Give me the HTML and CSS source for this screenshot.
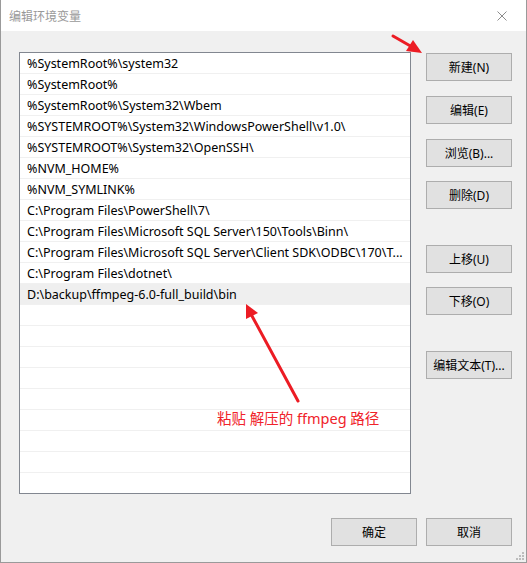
FILE: index.html
```html
<!DOCTYPE html>
<html lang="zh-CN">
<head>
<meta charset="utf-8">
<title>编辑环境变量</title>
<link rel="stylesheet" href="styles.css">
</head>
<body>
<div class="window">
  <div class="titlebar">
    <span class="title">编辑环境变量</span>
    <svg class="close" width="10" height="10" viewBox="0 0 10 10"><path d="M0.5 0.5 L9.5 9.5 M9.5 0.5 L0.5 9.5" stroke="#8c8c8c" stroke-width="1" fill="none"/></svg>
  </div>
  <div class="content">
    <div class="list">
      <div class="row">%SystemRoot%\system32</div>
      <div class="row">%SystemRoot%</div>
      <div class="row">%SystemRoot%\System32\Wbem</div>
      <div class="row">%SYSTEMROOT%\System32\WindowsPowerShell\v1.0\</div>
      <div class="row">%SYSTEMROOT%\System32\OpenSSH\</div>
      <div class="row">%NVM_HOME%</div>
      <div class="row">%NVM_SYMLINK%</div>
      <div class="row">C:\Program Files\PowerShell\7\</div>
      <div class="row">C:\Program Files\Microsoft SQL Server\150\Tools\Binn\</div>
      <div class="row">C:\Program Files\Microsoft SQL Server\Client SDK\ODBC\170\T...</div>
      <div class="row">C:\Program Files\dotnet\</div>
      <div class="row selected">D:\backup\ffmpeg-6.0-full_build\bin</div>
      <div class="row"></div>
      <div class="row"></div>
      <div class="row"></div>
      <div class="row"></div>
      <div class="row"></div>
      <div class="row note-row"><span class="note">粘贴 解压的 ffmpeg 路径</span></div>
      <div class="row"></div>
      <div class="row"></div>
      <div class="row"></div>
    </div>
    <div class="side">
      <button class="btn">新建(N)</button>
      <button class="btn gap15">编辑(E)</button>
      <button class="btn gap15">浏览(B)...</button>
      <button class="btn gap14">删除(D)</button>
      <button class="btn gap36">上移(U)</button>
      <button class="btn gap14">下移(O)</button>
      <button class="btn gap36">编辑文本(T)...</button>
    </div>
  </div>
  <div class="footer">
    <button class="btn">确定</button>
    <button class="btn">取消</button>
  </div>
  <svg class="grip" width="10" height="10" viewBox="0 0 10 10">
    <rect x="7" y="1" width="2" height="2" fill="#bcbcbc"/>
    <rect x="4" y="4" width="2" height="2" fill="#bcbcbc"/>
    <rect x="7" y="4" width="2" height="2" fill="#bcbcbc"/>
    <rect x="1" y="7" width="2" height="2" fill="#bcbcbc"/>
    <rect x="4" y="7" width="2" height="2" fill="#bcbcbc"/>
    <rect x="7" y="7" width="2" height="2" fill="#bcbcbc"/>
  </svg>
  <svg class="arrows" width="527" height="563" viewBox="0 0 527 563">
    <g fill="#ec1c24" stroke="#ec1c24">
      <line x1="393" y1="36" x2="413" y2="47.5" stroke-width="3" stroke-linecap="round"/>
      <polygon points="422,53 406,51 413,40" stroke="none"/>
      <line x1="298" y1="401" x2="252" y2="316" stroke-width="3" stroke-linecap="round"/>
      <polygon points="246,304 258,313 246,319" stroke="none"/>
    </g>
  </svg>
</div>
</body>
</html>
```

FILE: styles.css
```css
* { box-sizing: border-box; }
html, body { margin: 0; padding: 0; }
body {
  width: 527px;
  height: 563px;
  background: #ffffff;
  font-family: "Noto Sans", "Noto Sans CJK SC", sans-serif;
  font-size: 12px;
  color: #000;
  overflow: hidden;
}
.window {
  position: relative;
  width: 527px;
  height: 563px;
  border: 1px solid #9a9a9a;
  border-top: none;
  background: #f0f0f0;
  display: flex;
  flex-direction: column;
}
.titlebar {
  height: 31px;
  background: #ffffff;
  display: flex;
  align-items: center;
  justify-content: space-between;
  padding: 0 19px 0 8px;
  flex-shrink: 0;
}
.title {
  font-family: "Noto Sans CJK SC", sans-serif;
  font-size: 12px;
  color: #999999;
  line-height: 1;
  margin-top: 1px;
}
.close { display: block; }
.content {
  display: flex;
  padding: 21px 14px 0 18px;
}
.list {
  width: 392px;
  height: 442px;
  background: #ffffff;
  border: 1px solid #828790;
  overflow: hidden;
  flex-shrink: 0;
}
.row {
  height: 21px;
  border-bottom: 1px solid #f0f0f0;
  padding: 2px 0 0 7px;
  line-height: 18px;
  white-space: nowrap;
  overflow: hidden;
  font-size: 12.5px;
}
.row.selected { background: #efefef; }
.row.note-row { position: relative; overflow: visible; }
.note {
  position: absolute;
  left: 197px;
  top: -2px;
  font-family: "Noto Sans", "Noto Sans CJK SC", sans-serif;
  font-size: 14.5px;
  color: #f0222a;
  line-height: 20px;
}
.side {
  display: flex;
  flex-direction: column;
  margin-left: 15px;
  padding-top: 1px;
}
.btn {
  width: 86px;
  height: 28px;
  margin: 0;
  padding: 0;
  border: 1px solid #adadad;
  background: #e1e1e1;
  font-family: "Noto Sans", "Noto Sans CJK SC", sans-serif;
  font-size: 12px;
  color: #000;
  white-space: nowrap;
}
.gap14 { margin-top: 14px; }
.gap15 { margin-top: 15px; }
.gap36 { margin-top: 36px; }
.footer {
  display: flex;
  justify-content: flex-end;
  gap: 9px;
  padding: 24px 14px 0 0;
}
.grip {
  position: absolute;
  right: 1px;
  bottom: 1px;
}
.arrows {
  position: absolute;
  left: -1px;
  top: 0;
  pointer-events: none;
}
```
